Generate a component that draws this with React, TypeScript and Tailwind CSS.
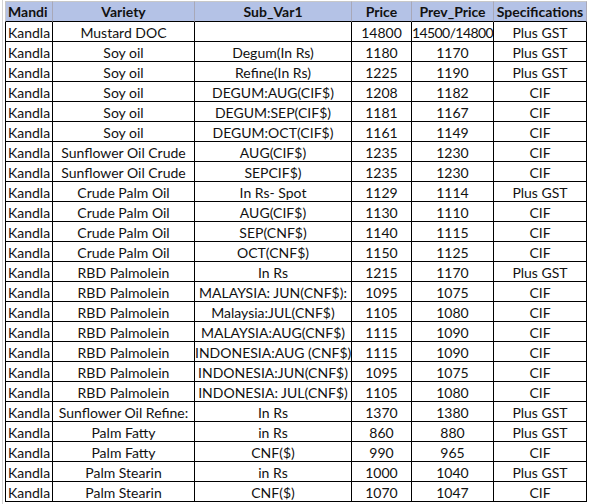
const headers = ["Mandi", "Variety", "Sub_Var1", "Price", "Prev_Price", "Specifications"];

const rows: string[][] = [
  ["Kandla", "Mustard DOC", "", "14800", "14500/14800", "Plus GST"],
  ["Kandla", "Soy oil", "Degum(In Rs)", "1180", "1170", "Plus GST"],
  ["Kandla", "Soy oil", "Refine(In Rs)", "1225", "1190", "Plus GST"],
  ["Kandla", "Soy oil", "DEGUM:AUG(CIF$)", "1208", "1182", "CIF"],
  ["Kandla", "Soy oil", "DEGUM:SEP(CIF$)", "1181", "1167", "CIF"],
  ["Kandla", "Soy oil", "DEGUM:OCT(CIF$)", "1161", "1149", "CIF"],
  ["Kandla", "Sunflower Oil Crude", "AUG(CIF$)", "1235", "1230", "CIF"],
  ["Kandla", "Sunflower Oil Crude", "SEPCIF$)", "1235", "1230", "CIF"],
  ["Kandla", "Crude Palm Oil", "In Rs- Spot", "1129", "1114", "Plus GST"],
  ["Kandla", "Crude Palm Oil", "AUG(CIF$)", "1130", "1110", "CIF"],
  ["Kandla", "Crude Palm Oil", "SEP(CNF$)", "1140", "1115", "CIF"],
  ["Kandla", "Crude Palm Oil", "OCT(CNF$)", "1150", "1125", "CIF"],
  ["Kandla", "RBD Palmolein", "In Rs", "1215", "1170", "Plus GST"],
  ["Kandla", "RBD Palmolein", "MALAYSIA: JUN(CNF$):", "1095", "1075", "CIF"],
  ["Kandla", "RBD Palmolein", "Malaysia:JUL(CNF$)", "1105", "1080", "CIF"],
  ["Kandla", "RBD Palmolein", "MALAYSIA:AUG(CNF$)", "1115", "1090", "CIF"],
  ["Kandla", "RBD Palmolein", "INDONESIA:AUG (CNF$)", "1115", "1090", "CIF"],
  ["Kandla", "RBD Palmolein", "INDONESIA:JUN(CNF$)", "1095", "1075", "CIF"],
  ["Kandla", "RBD Palmolein", "INDONESIA: JUL(CNF$)", "1105", "1080", "CIF"],
  ["Kandla", "Sunflower Oil Refine:", "In Rs", "1370", "1380", "Plus GST"],
  ["Kandla", "Palm Fatty", "in Rs", "860", "880", "Plus GST"],
  ["Kandla", "Palm Fatty", "CNF($)", "990", "965", "CIF"],
  ["Kandla", "Palm Stearin", "in Rs", "1000", "1040", "Plus GST"],
  ["Kandla", "Palm Stearin", "CNF($)", "1070", "1047", "CIF"],
];

export default function App() {
  return (
    <div className="w-[590px] h-[504px] bg-white overflow-hidden font-['Lato',sans-serif] text-[14px] text-[#111]">
      {/* excel gridline margin */}
      <div className="pl-[2px] h-full">
        <div className="border-l border-[#d4d4d4] pl-[2px] h-full">
          <div className="pt-[1px]">
            <div className="grid grid-cols-[48px_142px_157px_60px_82px_93px] w-max">
              {headers.map((h, i) => (
                <div
                  key={h}
                  className={
                    "h-[21px] bg-[#b4c2e6] border-t border-r border-t-[#c8c8c8] border-r-[#a8a8b8] border-b border-b-black font-bold leading-[20px] whitespace-nowrap overflow-hidden " +
                    (i === 0 ? "border-l border-l-[#c8c8c8] pl-[2px] text-left" : "text-center")
                  }
                >
                  {h}
                </div>
              ))}
              {rows.map((r, ri) =>
                r.map((c, ci) => (
                  <div
                    key={ri + "-" + ci}
                    className={
                      "h-[20px] border-r border-b border-black leading-[21px] whitespace-nowrap overflow-hidden " +
                      (ci === 0 ? "border-l pl-[2px] text-left" : "text-center") +
                      (c.length > 10 && ci === 4 ? " tracking-[-0.6px]" : "")
                    }
                  >
                    {c}
                  </div>
                ))
              )}
            </div>
          </div>
        </div>
      </div>
    </div>
  );
}
